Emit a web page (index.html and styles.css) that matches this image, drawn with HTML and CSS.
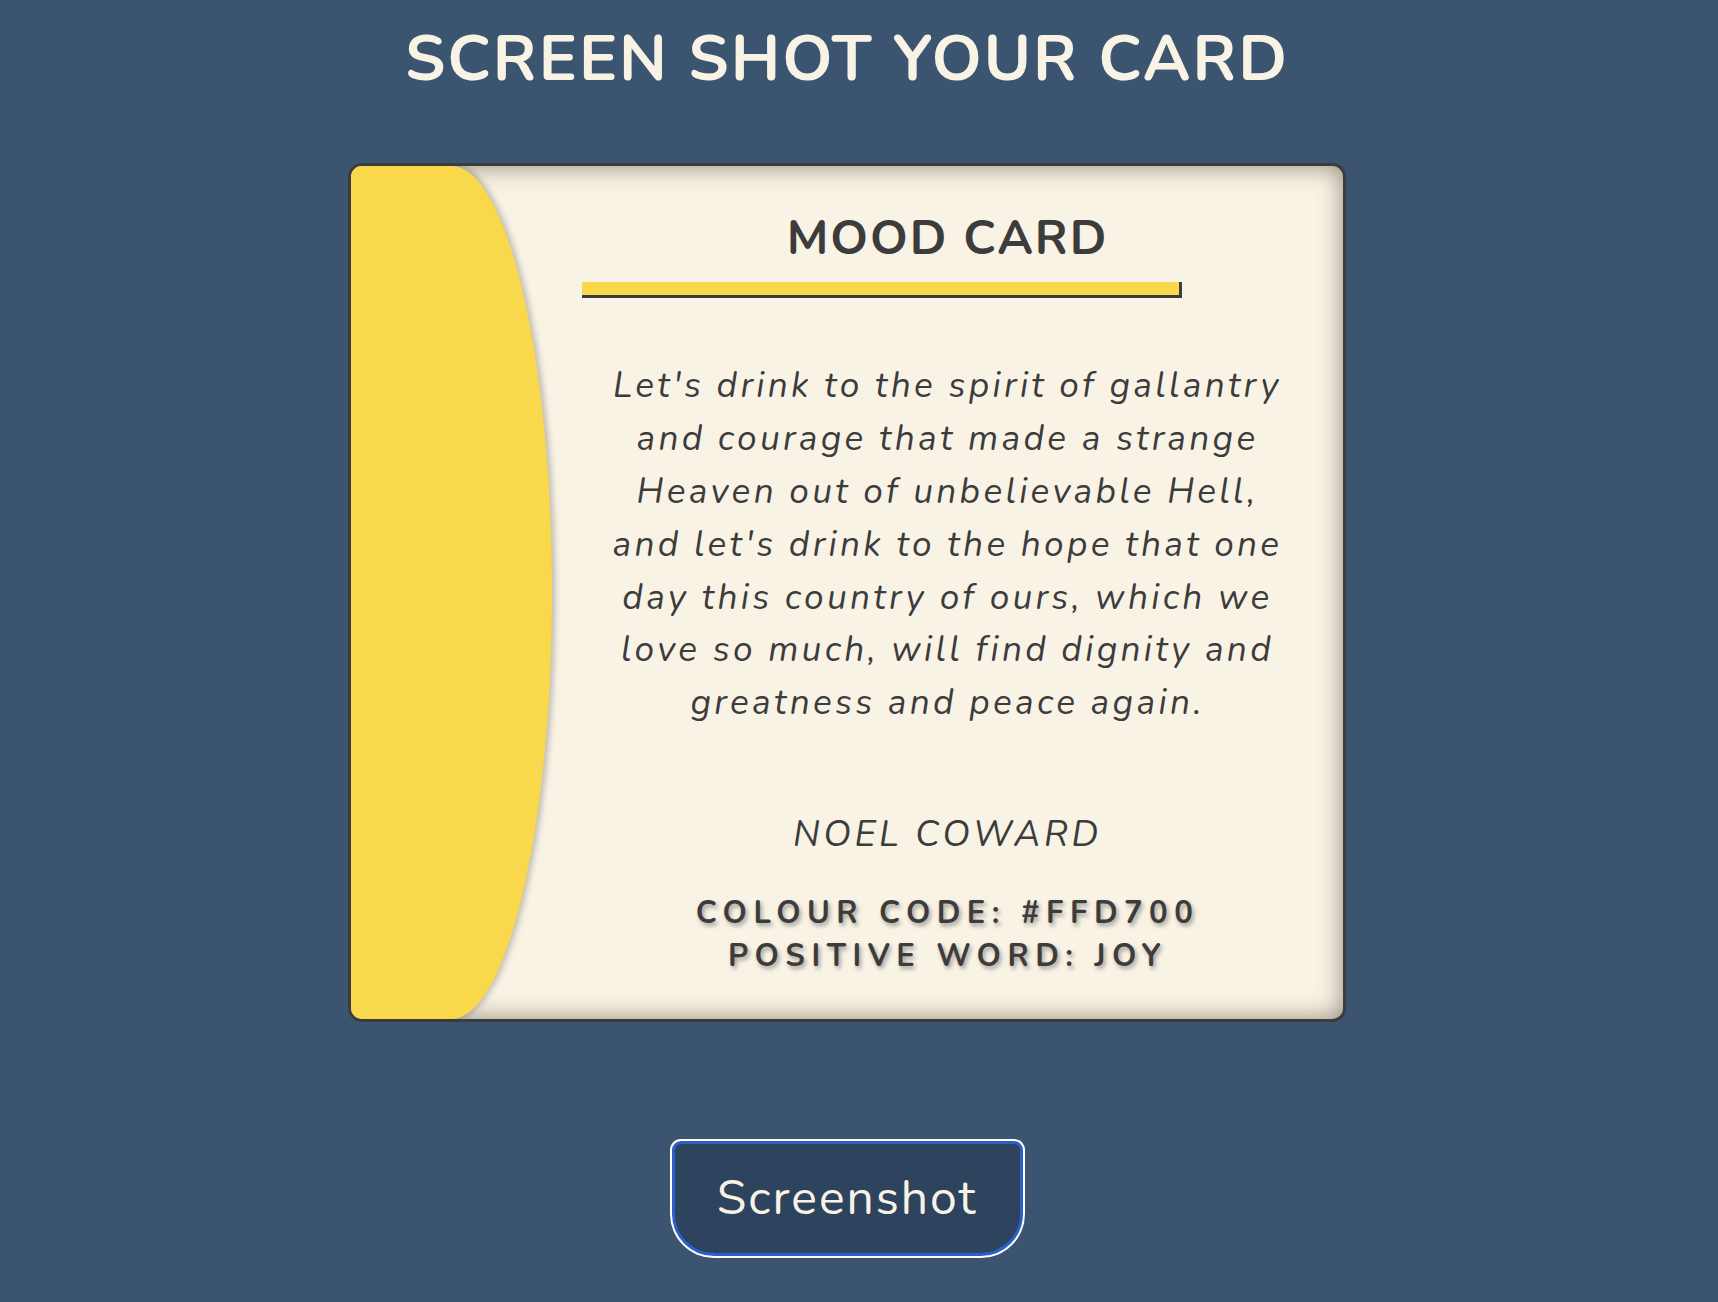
FILE: index.html
```html
<!DOCTYPE html>
<html lang="en">
<head>
<meta charset="utf-8">
<title>Mood Card</title>
<link rel="stylesheet" href="styles.css">
</head>
<body>
<main class="page">
  <h1 class="page-title">SCREEN SHOT YOUR CARD</h1>
  <section class="card">
    <div class="card-stripe"></div>
    <div class="card-content">
      <h2 class="card-title">MOOD CARD</h2>
      <div class="card-bar"></div>
      <p class="card-quote">Let's drink to the spirit of gallantry<br>and courage that made a strange<br>Heaven out of unbelievable Hell,<br>and let's drink to the hope that one<br>day this country of ours, which we<br>love so much, will find dignity and<br>greatness and peace again.</p>
      <p class="card-author">NOEL COWARD</p>
      <p class="card-meta">COLOUR CODE: #FFD700<br>POSITIVE WORD: JOY</p>
    </div>
  </section>
  <button class="shot-button" type="button">Screenshot</button>
</main>
</body>
</html>
```
FILE: styles.css
```css
html, body {
  margin: 0;
  padding: 0;
}

body {
  background: #3b546f;
  font-family: "Nunito", "Lato", "Open Sans", sans-serif;
  color: #3c3c3c;
}

.page {
  display: flex;
  flex-direction: column;
  align-items: center;
  padding-right: 24px;
  min-height: 1302px;
  box-sizing: border-box;
}

.page-title {
  margin: 21px 0 65px;
  font-size: 64px;
  line-height: 1.2;
  font-weight: 700;
  color: #f9f3e6;
  letter-spacing: 2px;
}

.card {
  display: flex;
  width: 998px;
  height: 859px;
  box-sizing: border-box;
  border: 3px solid #3c3c3c;
  border-radius: 14px;
  overflow: hidden;
  background: #f9f3e6;
  box-shadow: inset 0 0 24px rgba(60, 50, 30, 0.55);
}

.card-stripe {
  flex: 0 0 201px;
  background: #f9d84b;
  border-radius: 0 50% 50% 0;
  box-shadow: 3px 0 6px rgba(0, 0, 0, 0.24);
}

.card-content {
  flex: 1;
  display: flex;
  flex-direction: column;
  align-items: center;
  padding-top: 44px;
}

.card-title {
  margin: 0;
  font-size: 48px;
  line-height: 1.2;
  font-weight: 700;
  letter-spacing: 2px;
}

.card-bar {
  align-self: flex-start;
  margin: 15px 0 0 30px;
  width: 600px;
  height: 16px;
  box-sizing: border-box;
  background: #f9d84b;
  border-right: 3px solid #3c3c3c;
  border-bottom: 3px solid #3c3c3c;
}

.card-quote {
  margin: 61px 0 0;
  font-size: 35.2px;
  line-height: 52.8px;
  font-style: italic;
  text-align: center;
  letter-spacing: 3.3px;
  white-space: nowrap;
}

.card-author {
  margin: 84px 0 0;
  font-size: 36px;
  line-height: 1.2;
  font-style: italic;
  letter-spacing: 3.6px;
}

.card-meta {
  margin: 36px 0 0;
  font-size: 31px;
  line-height: 43px;
  font-weight: 700;
  text-align: center;
  letter-spacing: 6.5px;
  text-shadow: 2px 3px 4px rgba(0, 0, 0, 0.35);
}

.shot-button {
  margin-top: 119px;
  width: 351px;
  height: 115px;
  box-sizing: border-box;
  border: 3px solid #2c60c8;
  border-radius: 9px 9px 42px 42px;
  box-shadow: 0 0 0 2px #ffffff;
  background: #2e445e;
  color: #f9f3e6;
  font-family: inherit;
  font-size: 48px;
  letter-spacing: 2px;
  cursor: pointer;
}
```
